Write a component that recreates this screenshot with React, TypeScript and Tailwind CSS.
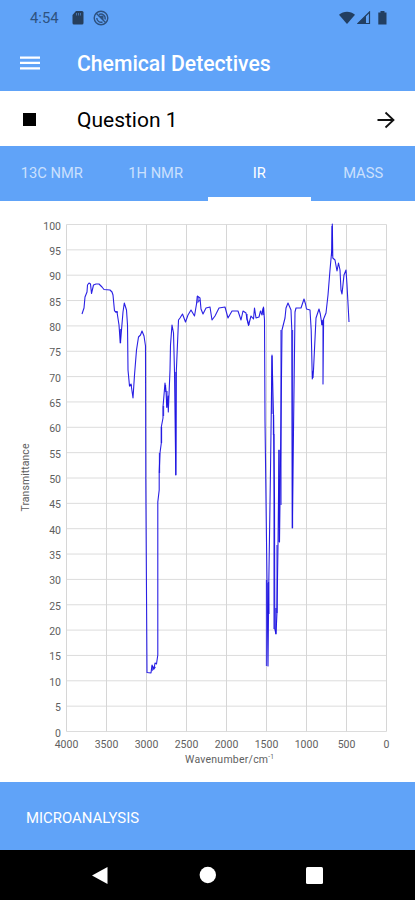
const TABS = ["13C NMR", "1H NMR", "IR", "MASS"];

const PLOT = { left: 66.5, right: 386.5, top: 224.5, bottom: 731.5 };

const TRANSMITTANCE = Array.from({ length: 21 }, (_, i) => i * 5);
const WAVENUMBERS = [4000, 3500, 3000, 2500, 2000, 1500, 1000, 500, 0];

const SPECTRUM = `
  82,314 84,308 85,297 87,292 87.5,285 89,283 90.5,284 91.5,293.5 93.5,285 96,284 99,284 102,287 104,289.5
  110,290 112,292 113,295 114.5,311 117,312 119,325 120.3,343 121.5,330 123,312 124.3,303 126.5,310
  127.5,325 128,370 129.5,386 131,384 133,398 134.5,375 136.5,350 138.5,337 140.5,335 142,331 144,336
  145.5,346 145.8,480 147,672.5 151,673 152,665 154,669 155,663 156.5,664 157.8,655 157.8,502 159.2,490
  159.2,472 160,453 161.3,443 161.3,427 163,418 163,407 165,383 166,391 166.8,407 168,396 168.3,412
  170,370 170.5,345 172,325 173.5,333 174.5,372 175.8,475 176.3,372 178.5,320 180,318 182.5,314 185.5,322
  188,315 191,310 194.5,316 196.5,304 197.3,296 200,298 201,309 203,314 206,308 210,307 212,320
  215,316 219,308 225,307 228,318 232,311 238,311 241,320 243,311 246,313 247,319 248.5,325.5 251,316
  253.5,319 254.5,308 256,318 259,317 260.5,311 262,315 263.5,307 264.5,320 265,420 267,580 268,666
  268.5,615 268.8,583 270.5,470 272,355 273.5,415 274.5,500 274.8,629 276,634 277,612 278,545 279,450
  279.5,542 281,420 282,330 285,318 286,308 288,303 291,310 291.8,330 292.3,528 293.5,430 295,312
  296,308 301,308 304,299 305.5,304 306.5,309 310,310 311.2,330 312.3,379 313.5,370 316,318 319,309
  320.3,314 322,325 323,320 323,384 323.6,319 326,313 328,295 330,270 331.8,250 332.3,224 332.8,258 335,260
  337,271 338.5,263 340,270 341,290 342,294 344,275 346,270 347,285 349,322
`;

// stretches where neighbouring samples overlap and the line reads solid
const DENSE = `
  M115 312h3M129 385.500h3M120.500 329v14M159.500 453v20M161.500 427v16M163.500 406v10M165.500 385v7M167 391v17
  M198 297v5l2-2M247 314v5l2 6M262 312l1.500-4v7M152.500 666v4l3-3
  M272 356v58M273.500 415v20M274 434v195M277 545v68M268 583v30M268.500 582l.5 32M275.800 608v26M279 450v92
  M292.500 330v198M266.500 580v86M281 330v175M175.800 372v103M313 371v7M322 320v5M332 226v30
`;

function StatusBar() {
  return (
    <div className="flex h-9 items-center justify-between pr-[28px] pl-[30px] text-[#2e5280]">
      <div className="flex items-center">
        <span className="w-[42px] text-[14.8px] leading-9">4:54</span>
        <svg width="12" height="14" viewBox="0 0 12 14">
          <path d="M4 0H10Q11.5 0 11.5 1.5V12Q11.5 13.5 10 13.5H2Q.5 13.5.5 12V4Z" fill="#263e5b" />
          <path d="M4.5 2v2.5M6.5 2v2.5M8.5 2v2.5" stroke="#4673ac" />
        </svg>
        <svg className="ml-[9px]" width="16" height="16" viewBox="0 0 16 16" fill="none" stroke="currentColor">
          <circle cx="8" cy="8" r="6.8" strokeWidth="1.4" />
          <path d="M3 3l10 10M3.800 8a4.300 4.300 0 0 0 5.700 4M6 4.500a4.300 4.300 0 0 1 6 5" strokeWidth="1.4" />
          <path d="M5.500 6L10.500 5.500V10Z" fill="currentColor" stroke="none" />
        </svg>
      </div>
      <div className="flex items-center text-[#223f62]">
        <svg width="16" height="14" viewBox="0 0 16 14" fill="currentColor">
          <path d="M0 3.7C4.5-.2 11.500-.2 16 3.700L8 13Z" />
        </svg>
        <svg className="ml-0.5" width="14" height="14" viewBox="0 0 14 14">
          <path d="M1 12.500L12.500 1V12.500Z" fill="none" stroke="currentColor" strokeWidth="1.2" />
          <path d="M.5 13L9 4.500V13Z" fill="currentColor" />
        </svg>
        <svg className="ml-[7px]" width="9" height="14" viewBox="0 0 9 14" fill="currentColor">
          <path d="M2.500 0H6.500V1.500H8.500V13.500H.3V1.500H2.500Z" />
        </svg>
      </div>
    </div>
  );
}

function SpectrumChart() {
  const width = PLOT.right - PLOT.left;
  const height = PLOT.bottom - PLOT.top;

  return (
    <svg
      className="block font-[Roboto,sans-serif]"
      width="415"
      height="581"
      viewBox="0 201 415 581"
      fill="#606060"
      fontSize="10.500"
    >
      {TRANSMITTANCE.map((value) => {
        const y = PLOT.bottom - (value / 100) * height;
        return (
          <g key={value}>
            <line x1={PLOT.left} x2={PLOT.right} y1={y} y2={y} stroke="#dcdcdc" />
            <text x="61" y={y + 5} textAnchor="end">
              {value}
            </text>
          </g>
        );
      })}
      {WAVENUMBERS.map((value) => {
        const x = PLOT.right - (value / 4000) * width;
        return (
          <g key={value}>
            <line x1={x} x2={x} y1={PLOT.top} y2={PLOT.bottom} stroke="#d6d6d6" />
            <text x={x} y="748" textAnchor="middle">
              {value}
            </text>
          </g>
        );
      })}
      <polyline
        points={SPECTRUM}
        fill="none"
        stroke="#2a20e4"
        strokeWidth="1.1"
        strokeLinejoin="round"
      />
      <path d={DENSE} fill="none" stroke="#1a10e0" strokeWidth="1.300" strokeOpacity="0.75" />
      <text transform="translate(28.500 511.500) rotate(-90)" textLength="68">
        Transmittance
      </text>
      <text x="185" y="762.500" textLength="89">
        Wavenumber/cm<tspan fontSize="6.500" dy="-3.500">-1</tspan>
      </text>
    </svg>
  );
}

export default function App() {
  return (
    <div className="flex h-[900px] w-[415px] flex-col bg-white font-[Roboto,sans-serif]">
      <header className="h-[91px] bg-[#60a3f8]">
        <StatusBar />
        <div className="flex h-[54px] items-center pl-5">
          <svg width="20" height="14" viewBox="0 0 20 14" fill="white">
            <path d="M0 .5h20v2.300H0zM0 5.800h20v2.300H0zM0 11.200h20v2.300H0z" />
          </svg>
          <h1 className="ml-[37px] pt-0.5 text-[21.200px] leading-none font-medium whitespace-nowrap text-white">
            Chemical Detectives
          </h1>
        </div>
      </header>

      <div className="flex h-[55px] items-center pt-0.5 pr-5 pl-[23px]">
        <div className="size-[13px] bg-black" />
        <h2 className="ml-[41px] pt-0.5 text-[21px] leading-none text-black">Question 1</h2>
        <svg className="ml-auto" width="18" height="18" viewBox="0 0 18 18" fill="none" stroke="#111" strokeWidth="1.800">
          <path d="M.5 9H16.500M8.500 1.500L16.500 9L8.500 16.500" />
        </svg>
      </div>

      <nav className="grid h-[55px] grid-cols-4 bg-[#60a3f8] text-[14.700px]">
        {TABS.map((tab) => (
          <button
            key={tab}
            className={
              tab === "IR"
                ? "border-t-4 border-b-4 border-t-transparent border-b-white text-white"
                : "border-y-4 border-transparent text-[#cbe0fd]"
            }
          >
            {tab}
          </button>
        ))}
      </nav>

      <main className="h-[581px]">
        <SpectrumChart />
      </main>

      <footer className="flex h-[68px] items-center bg-[#60a3f8] pt-1 pl-[26px]">
        <button className="text-[14.900px] text-white">MICROANALYSIS</button>
      </footer>

      <div className="h-[50px] bg-black">
        <svg width="415" height="50" viewBox="0 0 415 50" fill="white">
          <path d="M92 25.500L107.500 17V34Z" />
          <circle cx="207.800" cy="25" r="8.200" />
          <rect x="306" y="17" width="17" height="17" rx="1.500" />
        </svg>
      </div>
    </div>
  );
}
